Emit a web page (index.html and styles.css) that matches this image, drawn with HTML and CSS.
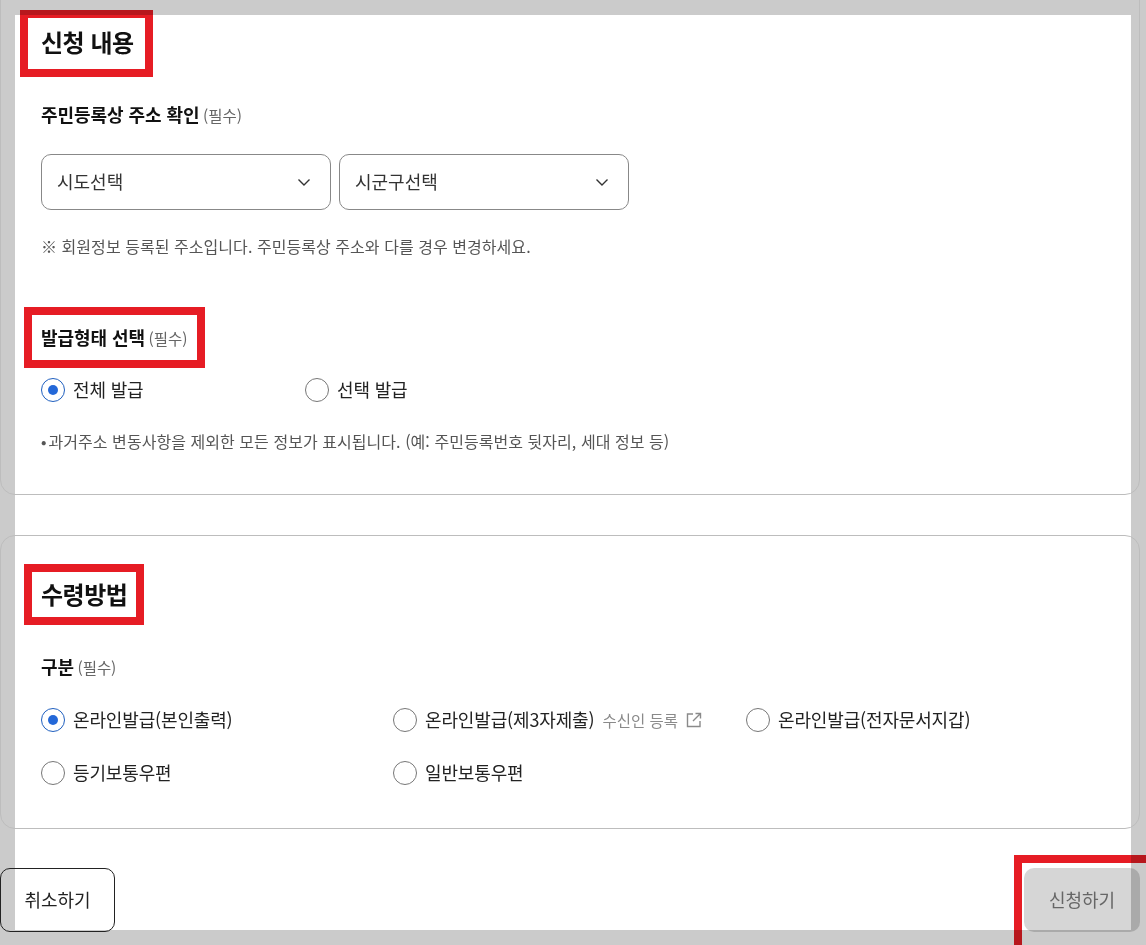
FILE: index.html
```html
<!DOCTYPE html>
<html lang="ko">
<head>
<meta charset="utf-8">
<title>신청 내용</title>
<link rel="stylesheet" href="styles.css">
</head>
<body>
<main class="sheet">
  <div class="content">
    <section class="card card-first">
      <h2 class="title">신청 내용</h2>
      <p class="label label-first">주민등록상 주소 확인 <span class="req">(필수)</span></p>
      <div class="selects">
        <div class="select"><span class="select-text">시도선택</span>
          <svg class="chev" viewBox="0 0 12 7" width="12" height="7"><path d="M.5.5L6 6 11.500.5" fill="none" stroke="#333" stroke-width="1.4"/></svg>
        </div>
        <div class="select"><span class="select-text">시군구선택</span>
          <svg class="chev" viewBox="0 0 12 7" width="12" height="7"><path d="M.5.5L6 6 11.500.5" fill="none" stroke="#333" stroke-width="1.4"/></svg>
        </div>
      </div>
      <p class="note">※ 회원정보 등록된 주소입니다. 주민등록상 주소와 다를 경우 변경하세요.</p>
      <p class="label label-second">발급형태 선택 <span class="req">(필수)</span></p>
      <div class="radios radios-two">
        <div class="radio-item"><span class="radio on"></span><span class="radio-text">전체 발급</span></div>
        <div class="radio-item"><span class="radio"></span><span class="radio-text">선택 발급</span></div>
      </div>
      <p class="hint"><span class="bullet">•</span>과거주소 변동사항을 제외한 모든 정보가 표시됩니다. (예: 주민등록번호 뒷자리, 세대 정보 등)</p>
    </section>

    <section class="card card-second">
      <h2 class="title">수령방법</h2>
      <p class="label label-first">구분 <span class="req">(필수)</span></p>
      <div class="radios radios-three">
        <div class="radio-item"><span class="radio on"></span><span class="radio-text">온라인발급(본인출력)</span></div>
        <div class="radio-item"><span class="radio"></span><span class="radio-text">온라인발급(제3자제출)</span>
          <span class="link">수신인 등록
            <svg viewBox="0 0 16 16" width="16" height="16"><path d="M7 2H1.500v12.500h12.500V9M9.500 1.500H14.500V6.500M14.500 1.500L7 9" fill="none" stroke="#8a8a8a" stroke-width="1.4"/></svg>
          </span>
        </div>
        <div class="radio-item"><span class="radio"></span><span class="radio-text">온라인발급(전자문서지갑)</span></div>
        <div class="radio-item"><span class="radio"></span><span class="radio-text">등기보통우편</span></div>
        <div class="radio-item"><span class="radio"></span><span class="radio-text">일반보통우편</span></div>
      </div>
    </section>

    <div class="actions">
      <button class="btn btn-cancel" type="button">취소하기</button>
      <button class="btn btn-submit" type="button">신청하기</button>
    </div>
  </div>
</main>
<div class="mark mark-a"></div>
<div class="mark mark-b"></div>
<div class="mark mark-c"></div>
<div class="mark mark-d"></div>
</body>
</html>
```
FILE: styles.css
```css
* { box-sizing: border-box; }
html, body { margin: 0; height: 945px; overflow: hidden; }
body {
  background: #cbcbcb;
  font-family: "Noto Sans CJK KR", "Noto Sans", sans-serif;
  color: #1c1c1c;
  position: relative;
}
p, h2 { margin: 0; }
.sheet { background: #fff; margin: 15px 0 0 15px; width: 1116px; height: 915px; }
.sheet::before { content: ""; display: table; }
.content { margin: 0 -9px 0 -15px; }
.card { border: 1px solid #bdbdbd; border-radius: 15px; padding: 0 40px; }
.card-first { margin-top: -40px; padding-top: 49px; padding-bottom: 42px; }
.card-second { margin-top: 40px; padding-top: 41px; padding-bottom: 43px; }
.title { font-size: 24px; line-height: 34px; font-weight: 700; color: #111; letter-spacing: -.5px; }
.label { font-size: 18px; line-height: 24px; font-weight: 700; color: #111; letter-spacing: -.05px; }
.label-first { margin-top: 43px; padding-bottom: 1px; }
.label-second { margin-top: 68px; padding-bottom: 1px; }
.req { font-size: 15.500px; font-weight: 400; color: #666; margin-left: -1.500px; }
.selects { display: flex; gap: 8px; margin-top: 26px; }
.select {
  width: 290px; height: 56px; padding: 0 20px 0 15px;
  border: 1px solid #888; border-radius: 10px;
  display: flex; align-items: center; justify-content: space-between;
  font-size: 18px; color: #333;
}
.select-text { padding-bottom: 3px; }
.note { margin-top: 25px; font-size: 16px; line-height: 22px; color: #555; letter-spacing: .05px; }
.hint { margin-top: 28px; font-size: 16px; line-height: 22px; color: #555; letter-spacing: .05px; }
.bullet { margin-right: 2px; }
.radios { margin-top: 28px; }
.radios-two { display: flex; margin-top: 27px; }
.radios-two .radio-item { width: 264px; }
.radios-three { display: grid; grid-template-columns: 352px 353px 1fr; row-gap: 29px; }
.radio-item { display: flex; align-items: center; gap: 8px; height: 24px; font-size: 18px; color: #222; }
.radio-text { letter-spacing: -.15px; padding-bottom: 2px; }
.radio { width: 24px; height: 24px; border: 1px solid #777; border-radius: 50%; flex: none; background: #fff; position: relative; }
.radio.on { border-color: #1f5fbf; }
.radio.on::after { content: ""; position: absolute; inset: 6px; border-radius: 50%; background: #2468d8; }
.link { display: inline-flex; align-items: center; gap: 8px; font-size: 15.500px; color: #8a8a8a; }
.actions { display: flex; justify-content: space-between; margin-top: 39px; }
.btn { height: 64px; border-radius: 10px; font: inherit; font-size: 18px; padding-bottom: 4px; }
.btn-cancel { width: 115px; background: transparent; border: 1px solid #222; color: #222; }
.btn-submit { width: 116px; background: rgba(0,0,0,.16); border: 0; color: #666; }
.mark { position: absolute; border: 8px solid #e61c24; mix-blend-mode: multiply; pointer-events: none; }
.mark-a { left: 20px; top: 10px; width: 133px; height: 67px; }
.mark-b { left: 24px; top: 307px; width: 181px; height: 61px; }
.mark-c { left: 24px; top: 564px; width: 120px; height: 61px; }
.mark-d { left: 1014px; top: 855px; width: 140px; height: 98px; }
```
